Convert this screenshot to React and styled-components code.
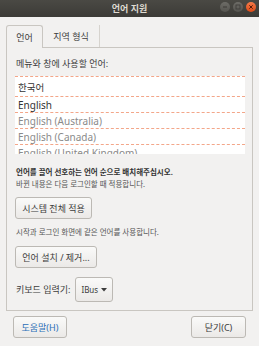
import styled, { createGlobalStyle } from "styled-components";

const Global = createGlobalStyle`
  html, body { margin: 0; padding: 0; background: #f2f1f0; }
  body { font-family: "Noto Sans", "Noto Sans CJK KR", sans-serif; }
`;

const Window = styled.div`
  width: 259px;
  height: 346px;
  background: #f2f1f0;
  display: flex;
  flex-direction: column;
  overflow: hidden;
`;

const TitleBar = styled.div`
  height: 17px;
  flex: none;
  background: linear-gradient(#4a4944, #3c3b37);
  position: relative;
  display: flex;
  align-items: center;
  justify-content: center;
  color: #dfdbd2;
  font-size: 9px;
  font-weight: 600;
  font-family: "Noto Sans", "Noto Sans CJK KR", sans-serif;
`;

const Controls = styled.div`
  position: absolute;
  right: 3px;
  top: 2px;
  display: flex;
  gap: 3px;
`;

const Body = styled.div`
  padding: 8px 6px 0 6px;
  display: flex;
  flex-direction: column;
`;

const TabRow = styled.div`
  height: 22px;
  display: flex;
  align-items: stretch;
  position: relative;
  z-index: 1;
`;

const Tab = styled.div`
  width: ${(p) => p.$w}px;
  box-sizing: border-box;
  display: flex;
  align-items: center;
  justify-content: center;
  font-size: 9px;
  color: #3c3c3c;
  ${(p) =>
    p.$active
      ? `
    border: 1px solid #c9c6c1;
    border-bottom: none;
    border-radius: 3px 3px 0 0;
    background: #f2f1f0;
    height: 23px;
  `
      : `
    border-right: 1px solid #d6d3ce;
    height: 22px;
  `}
`;

const Panel = styled.div`
  height: 264px;
  box-sizing: border-box;
  border: 1px solid #c9c6c1;
  padding: 10px 8px 0 8px;
  display: flex;
  flex-direction: column;
  align-items: flex-start;
`;

const Label = styled.div`
  font-size: ${(p) => p.$size || 9}px;
  line-height: 12px;
  height: 12px;
  color: ${(p) => p.$color || "#3c3c3c"};
  font-weight: ${(p) => (p.$bold ? 700 : 400)};
  margin-top: ${(p) => p.$mt || 0}px;
  white-space: nowrap;
  padding-left: 1px;
`;

const List = styled.div`
  margin-top: 6px;
  width: 230px;
  height: 78px;
  background: #fff;
  overflow: hidden;
`;

const Row = styled.div`
  height: ${(p) => p.$h}px;
  box-sizing: border-box;
  border-top: 1px dashed #f3a689;
  padding-left: 3px;
  display: flex;
  align-items: center;
  font-size: ${(p) => p.$size}px;
  color: ${(p) => (p.$dim ? "#8a8a8a" : "#333")};
`;

const Button = styled.button`
  height: 22px;
  width: ${(p) => p.$w}px;
  margin-top: ${(p) => p.$mt || 0}px;
  box-sizing: border-box;
  border: 1px solid #bcb9b4;
  border-radius: 3px;
  background: linear-gradient(#fafaf9, #ebe9e7);
  font-family: "Noto Sans", "Noto Sans CJK KR", sans-serif;
  font-size: 9px;
  color: ${(p) => p.$color || "#3c3c3c"};
  padding: 0;
  display: flex;
  align-items: center;
  justify-content: center;
`;

const KeyRow = styled.div`
  margin-top: 9px;
  display: flex;
  align-items: center;
  gap: 5px;
`;

const Dropdown = styled.div`
  width: 38px;
  height: 25px;
  box-sizing: border-box;
  border: 1px solid #bcb9b4;
  border-radius: 3px;
  background: linear-gradient(#fafaf9, #ebe9e7);
  display: flex;
  align-items: center;
  padding-left: 5px;
  gap: 3px;
  font-size: 8px;
  color: #3c3c3c;
`;

const Footer = styled.div`
  margin-top: 5px;
  padding: 0 7px 0 7px;
  display: flex;
  justify-content: space-between;
`;

const Dot = ({ close, children }) => (
  <svg width="10" height="10" viewBox="0 0 10 10">
    <defs>
      <linearGradient id={close ? "gc" : "gg"} x1="0" y1="0" x2="0" y2="1">
        <stop offset="0" stopColor={close ? "#f47a4a" : "#6d6c67"} />
        <stop offset="1" stopColor={close ? "#df4a16" : "#55544f"} />
      </linearGradient>
    </defs>
    <circle cx="5" cy="5" r="5" fill={`url(#${close ? "gc" : "gg"})`} />
    {children}
  </svg>
);

export default function App() {
  return (
    <Window>
      <Global />
      <TitleBar>
        언어 지원
        <Controls>
          <Dot>
            <rect x="3" y="4.5" width="4" height="1" fill="#3c3b37" />
          </Dot>
          <Dot>
            <rect x="3" y="3" width="4" height="4" fill="none" stroke="#3c3b37" strokeWidth="0.8" />
          </Dot>
          <Dot close>
            <path d="M3.3 3.3 L6.7 6.7 M6.7 3.3 L3.3 6.7" stroke="#5a1a06" strokeWidth="1" />
          </Dot>
        </Controls>
      </TitleBar>
      <Body>
        <TabRow>
          <Tab $active $w={37}>언어</Tab>
          <Tab $w={57}>지역 형식</Tab>
        </TabRow>
        <Panel>
          <Label>메뉴와 창에 사용할 언어:</Label>
          <List>
            <Row $h={20} $size={9.5}>한국어</Row>
            <Row $h={16} $size={10}>English</Row>
            <Row $h={16} $size={10} $dim>English (Australia)</Row>
            <Row $h={16} $size={10} $dim>English (Canada)</Row>
            <Row $h={16} $size={10} $dim>English (United Kingdom)</Row>
          </List>
          <Label $mt={12} $size={7.5} $bold $color="#333">
            언어를 끌어 선호하는 언어 순으로 배치해주십시오.
          </Label>
          <Label $size={7.5} $color="#555">바뀐 내용은 다음 로그인할 때 적용합니다.</Label>
          <Button $w={77} $mt={7}>시스템 전체 적용</Button>
          <Label $mt={7} $size={7.5} $color="#555">
            시작과 로그인 화면에 같은 언어를 사용합니다.
          </Label>
          <Button $w={82} $mt={8}>언어 설치 / 제거...</Button>
          <KeyRow>
            <Label>키보드 입력기:</Label>
            <Dropdown>
              IBus
              <svg width="6" height="4" viewBox="0 0 6 4">
                <path d="M0 0 L6 0 L3 3.5 Z" fill="#3c3c3c" />
              </svg>
            </Dropdown>
          </KeyRow>
        </Panel>
        <Footer>
          <Button $w={54} $color="#2b6fb8">도움말(H)</Button>
          <Button $w={55}>닫기(C)</Button>
        </Footer>
      </Body>
    </Window>
  );
}
